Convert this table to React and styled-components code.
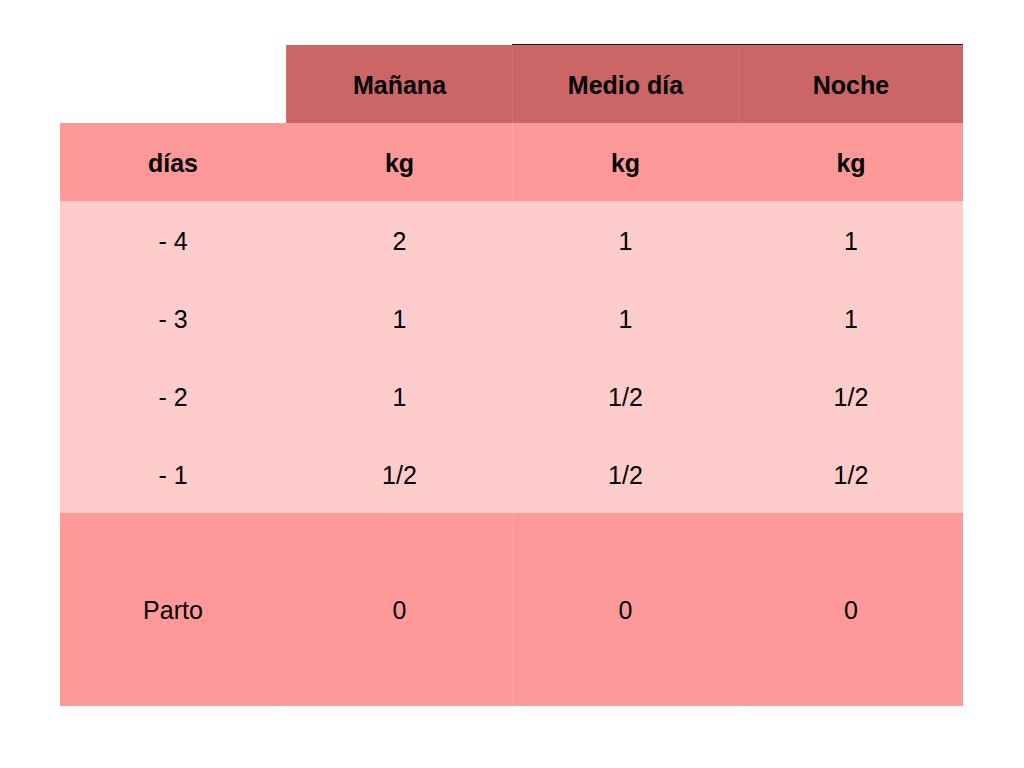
import React from "react";
import styled, { createGlobalStyle } from "styled-components";

const GlobalStyle = createGlobalStyle`
  html, body {
    margin: 0;
    padding: 0;
    background: #ffffff;
    font-family: "Liberation Sans", Arial, sans-serif;
  }
`;

const Page = styled.div`
  width: 1024px;
  height: 768px;
  padding: 45px 0 0 60px;
  box-sizing: border-box;
  background: #fff;
`;

const Grid = styled.div`
  display: grid;
  grid-template-columns: 226px 226px 226px 225px;
  grid-template-rows: 78px 78px 78px 78px 78px 78px 193px;
  width: 903px;
`;

const bg = {
  head: "#cc6666",
  sub: "#ff9999",
  data: "#ffcccc",
  last: "#ff9999",
  empty: "transparent",
};

const Cell = styled.div`
  display: flex;
  align-items: center;
  justify-content: center;
  padding-top: 2px;
  background: ${({ $kind }) => bg[$kind]};
  color: #000;
  font-size: 25px;
  font-weight: ${({ $bold }) => ($bold ? 700 : 400)};
  box-shadow: ${({ $line }) => ($line ? "0 -1px 0 #1a1a1a" : "none")};
  border-left: ${({ $sep, $kind }) =>
    $sep && $kind !== "empty" ? "1px solid rgba(255,255,255,0.08)" : "none"};
  box-sizing: border-box;
`;

const rows = [
  ["- 4", "2", "1", "1"],
  ["- 3", "1", "1", "1"],
  ["- 2", "1", "1/2", "1/2"],
  ["- 1", "1/2", "1/2", "1/2"],
];

export default function App() {
  return (
    <>
      <GlobalStyle />
      <Page>
        <Grid>
          <Cell $kind="empty" />
          <Cell $kind="head" $bold $sep>Mañana</Cell>
          <Cell $kind="head" $bold $sep $line>Medio día</Cell>
          <Cell $kind="head" $bold $sep $line>Noche</Cell>

          <Cell $kind="sub" $bold>días</Cell>
          <Cell $kind="sub" $bold $sep>kg</Cell>
          <Cell $kind="sub" $bold $sep>kg</Cell>
          <Cell $kind="sub" $bold $sep>kg</Cell>

          {rows.map((r) =>
            r.map((v, i) => (
              <Cell key={r[0] + i} $kind="data" $sep={i > 0}>
                {v}
              </Cell>
            ))
          )}

          <Cell $kind="last">Parto</Cell>
          <Cell $kind="last" $sep>0</Cell>
          <Cell $kind="last" $sep>0</Cell>
          <Cell $kind="last" $sep>0</Cell>
        </Grid>
      </Page>
    </>
  );
}
